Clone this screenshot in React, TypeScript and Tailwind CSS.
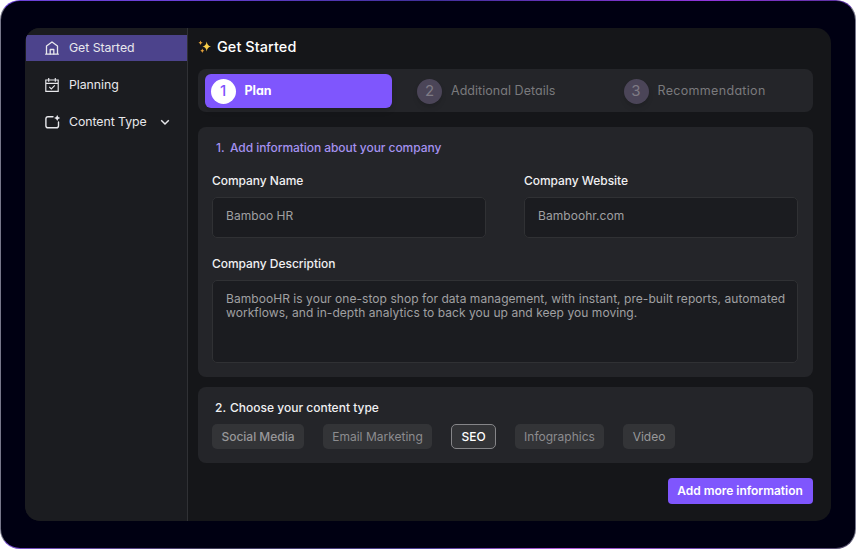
import React from "react";

const inter = "font-['Inter','Liberation_Sans',sans-serif]";

function HomeIcon() {
  return (
    <svg width="14" height="14" viewBox="0 0 14 14" fill="none" stroke="currentColor" strokeWidth="1.3" strokeLinejoin="round" strokeLinecap="round">
      <path d="M.7 13.2h12.6M1.5 13.2V5.1L7 .9l5.500 4.200v8.100" />
      <path d="M5.200 13V8.500h3.600V13" />
    </svg>
  );
}

function CalendarIcon() {
  return (
    <svg width="14" height="14" viewBox="0 0 14 14" fill="none" stroke="currentColor" strokeWidth="1.15">
      <path d="M.8 2h12.400v11.400H.8zM.8 5.300h12.400M3.700 0v3.800M10.300 0v3.800" />
      <path d="M4.300 8.900l2 2 3.500-3.500" />
    </svg>
  );
}

function ContentIcon() {
  return (
    <svg width="16" height="14" viewBox="0 0 16 14" fill="none" stroke="currentColor" strokeWidth="1.4" strokeLinecap="round">
      <path d="M8 1.700H3Q.9 1.700.9 3.800v6.900q0 2.100 2.100 2.100h8.400q2.100 0 2.100-2.100V7" />
      <path d="M12.200-.1l1 2.100 2.100 1-2.100 1-1 2.100-1-2.100-2.100-1 2.100-1z" fill="currentColor" stroke="none" />
    </svg>
  );
}

function Sparkles() {
  return (
    <svg width="14" height="14" viewBox="0 0 14 14" fill="#f8cf4a">
      <path d="M8.700 1.600Q9.200 6 13 6.600 9.200 7.200 8.700 11.600 8.200 7.200 4.400 6.600 8.200 6 8.700 1.600z" />
      <path d="M2.500.5Q2.700 2.300 4.700 2.700 2.700 3.100 2.500 4.900 2.300 3.100.5 2.700 2.300 2.300 2.500.5z" fill="#e8a33a" />
      <path d="M4.300 8.600Q4.500 10.400 6.300 10.800 4.500 11.200 4.300 13 4.100 11.200 2.300 10.800 4.100 10.400 4.300 8.600z" fill="#e8a33a" />
    </svg>
  );
}

function NavItem({ icon, label, active, chevron }: { icon: React.ReactNode; label: string; active?: boolean; chevron?: boolean }) {
  return (
    <div className={`ml-px flex h-[26px] items-center pl-[19px] text-[#e8e8ec] ${active ? "bg-[#4c438c]" : ""}`}>
      <span className="w-6 shrink-0">{icon}</span>
      <span className="text-[12.3px] tracking-[-0.05px] whitespace-nowrap">{label}</span>
      {chevron && (
        <svg className="ml-[13px]" width="10" height="7" viewBox="0 0 10 7" fill="none" stroke="currentColor" strokeWidth="1.5">
          <path d="M1.200 1.300L5 5l3.800-3.700" />
        </svg>
      )}
    </div>
  );
}

function Step({ n, label, active, spacing }: { n: number; label: string; active?: boolean; spacing: string }) {
  return (
    <div className={`flex h-[34px] items-center rounded-md pl-[6px] [font-feature-settings:'cv11'] ${active ? "bg-[#7f56fd] shadow-md" : ""}`}>
      <span className={`flex size-[25px] items-center justify-center rounded-full text-[15px] ${active ? "bg-white font-medium text-[#7f56fd]" : "bg-[#4b4558] text-[#7f7b85] shadow-md"}`}>{n}</span>
      <span className={`ml-[9px] text-[12.5px] whitespace-nowrap ${spacing} ${active ? "font-bold text-white" : "text-[#7a7a7d]"}`}>{label}</span>
    </div>
  );
}

function Label({ children }: { children: React.ReactNode }) {
  return <div className="text-[12px] leading-4 font-medium tracking-[-0.04px] text-[#f0f0f2]">{children}</div>;
}

function Field({ label, value }: { label: string; value: string }) {
  return (
    <div className="w-[274px]">
      <Label>{label}</Label>
      <div className="mt-2 h-[41px] rounded-[5px] border border-[#303134] bg-[#1b1c20] px-[13px] pt-[10px] text-[12px] leading-4 tracking-[0.05px] text-[#a0a0a2]">{value}</div>
    </div>
  );
}

const tags = [
  { name: "Social Media", style: "w-[92px] border-transparent font-medium text-[#98989a]" },
  { name: "Email Marketing", style: "w-[109px] border-transparent text-[#8c8c8f]" },
  { name: "SEO", style: "w-[45px] border-[#858588] font-medium text-white" },
  { name: "Infographics", style: "w-[89px] border-transparent text-[#8c8c8f]" },
  { name: "Video", style: "w-[52px] border-transparent text-[#98989a]" },
];

export default function App() {
  return (
    <div className={`h-[549px] w-[856px] bg-white ${inter}`}>
      <div className="h-full rounded-[20px] p-px [background:linear-gradient(90deg,#6b42d8,#6a40d8_20%,#40309a_50%,#9035dc_83%,#55309a)_top/100%_8px_no-repeat,linear-gradient(90deg,#7a50d0,#44405c_25%,#50409a_50%,#b45ae0_66%,#7048b0_82%,#55506a)_bottom/100%_8px_no-repeat,#77778a]">
        <div className="h-full rounded-[19px] bg-[#000012] pt-[27px] pl-6">
          <div className="flex h-[493px] w-[806px] overflow-hidden rounded-[15px] bg-[#151619]">
            <aside className="flex w-[163px] shrink-0 flex-col gap-[11px] border-r border-[#303135] bg-[#1b1c20] pt-[7px]">
              <NavItem icon={<HomeIcon />} label="Get Started" active />
              <NavItem icon={<CalendarIcon />} label="Planning" />
              <NavItem icon={<ContentIcon />} label="Content Type" chevron />
            </aside>
            <main className="w-[624.500px] pt-[10px] pl-[9.500px]">
              <div className="flex h-[18px] items-center gap-[5.500px]">
                <Sparkles />
                <h1 className="text-[14.4px] leading-[18px] font-medium tracking-[0.1px] text-white">Get Started</h1>
              </div>
              <div className="mt-[13px] grid h-[43px] grid-cols-[187.500px_187.500px_1fr] gap-x-[19px] rounded-lg bg-[#242529] pt-[5px] pl-[7px]">
                <Step n={1} label="Plan" spacing="tracking-normal" active />
                <Step n={2} label="Additional Details" spacing="tracking-[0.04px]" />
                <Step n={3} label="Recommendation" spacing="tracking-[0.32px]" />
              </div>
              <section className="mt-[14.500px] h-[250.500px] rounded-lg bg-[#242529] px-[14.500px] pt-[13.500px]">
                <h2 className="flex gap-[5.500px] pl-[4px] text-[12px] leading-4 font-medium tracking-[-0.06px] text-[#a592f0]">
                  <span>1.</span>
                  <span>Add information about your company</span>
                </h2>
                <div className="mt-[17px] flex justify-between">
                  <Field label="Company Name" value="Bamboo HR" />
                  <Field label="Company Website" value="Bamboohr.com" />
                </div>
                <div className="mt-[18px]">
                  <Label>Company Description</Label>
                  <div className="mt-2 h-[83px] rounded-[5px] border border-[#303134] bg-[#1b1c20] px-[13px] pt-[11px] text-[12px] leading-[14px] tracking-[0.053px] text-[#a0a0a2]">
                    <p className="whitespace-nowrap">BambooHR is your one-stop shop for data management, with instant, pre-built reports, automated</p>
                    <p className="whitespace-nowrap">workflows, and in-depth analytics to back you up and keep you moving.</p>
                  </div>
                </div>
              </section>
              <section className="mt-[9.500px] h-[76.500px] rounded-lg bg-[#242529] px-[14.500px] pt-[13px]">
                <h2 className="flex gap-[4px] pl-[3px] text-[12px] leading-4 font-medium text-[#f0f0f2]">
                  <span>2.</span>
                  <span>Choose your content type</span>
                </h2>
                <div className="mt-2 flex gap-[19px]">
                  {tags.map((t) => (
                    <span key={t.name} className={`flex h-[25px] items-center justify-center rounded-[5px] border bg-[#333437] pt-px text-[12px] whitespace-nowrap ${t.style}`}>{t.name}</span>
                  ))}
                </div>
              </section>
              <div className="mt-[14.500px] flex justify-end">
                <button className="h-[26px] w-[145px] rounded-[4px] bg-[#7f56fd] text-[12px] font-semibold tracking-[-0.02px] whitespace-nowrap text-white">Add more information</button>
              </div>
            </main>
          </div>
        </div>
      </div>
    </div>
  );
}
